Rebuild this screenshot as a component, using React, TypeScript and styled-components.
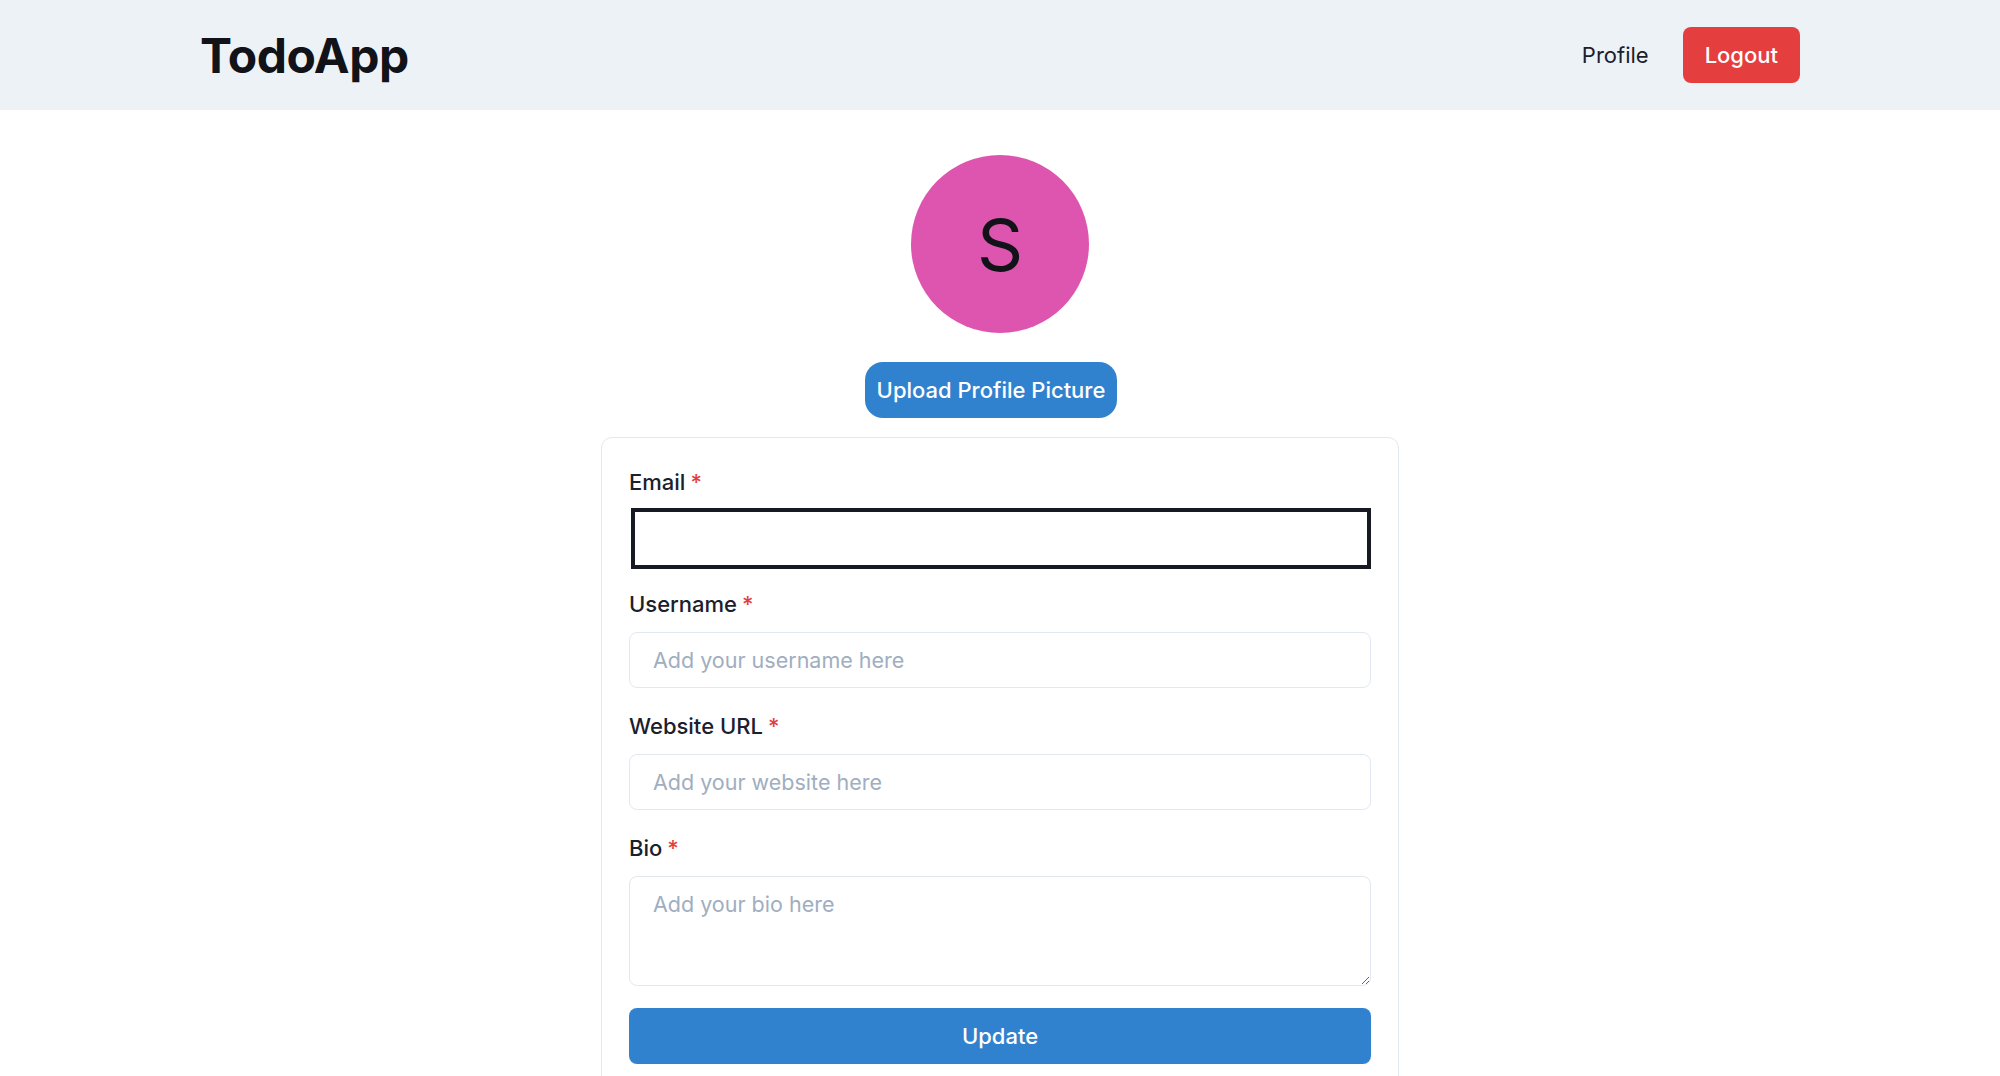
import React from "react";
import styled, { createGlobalStyle } from "styled-components";

const GlobalStyle = createGlobalStyle`
  html, body {
    margin: 0;
    padding: 0;
    background: #ffffff;
    font-family: Inter, "Noto Sans", "Liberation Sans", sans-serif;
    color: #1a202c;
  }
  * { box-sizing: border-box; }
`;

const Header = styled.header`
  height: 110px;
  background: #edf2f7;
  display: flex;
  justify-content: center;
`;

const HeaderInner = styled.div`
  width: 1600px;
  display: flex;
  align-items: center;
  justify-content: space-between;
`;

const Logo = styled.h1`
  margin: 0;
  font-size: 48px;
  font-weight: 700;
  letter-spacing: -0.5px;
  color: #111318;
`;

const Nav = styled.nav`
  display: flex;
  align-items: center;
  gap: 34px;
`;

const NavLink = styled.a`
  font-size: 22px;
  color: #1a202c;
  text-decoration: none;
`;

const Button = styled.button<{ $tone: "red" | "blue"; $pill?: boolean; $block?: boolean }>`
  height: 56px;
  padding: 0 ${(p) => (p.$pill ? "12px" : "22px")};
  border: none;
  border-radius: ${(p) => (p.$pill ? "18px" : "8px")};
  background: ${(p) => (p.$tone === "red" ? "#e53e3e" : "#3182ce")};
  color: #ffffff;
  font-family: inherit;
  font-size: 22px;
  font-weight: 500;
  width: ${(p) => (p.$block ? "100%" : "auto")};
  cursor: pointer;
`;

const Main = styled.main`
  display: flex;
  flex-direction: column;
  align-items: center;
  padding-top: 45px;
`;

const Avatar = styled.div`
  width: 178px;
  height: 178px;
  border-radius: 50%;
  background: #dd55af;
  display: flex;
  align-items: center;
  justify-content: center;
  font-size: 72px;
  font-weight: 400;
  color: #111318;
`;

const UploadRow = styled.div`
  margin-top: 29px;
  padding-right: 18px;
  display: flex;
  justify-content: center;
`;

const Card = styled.form`
  margin-top: 19px;
  width: 798px;
  border: 1px solid #e2e8f0;
  border-radius: 11px;
  padding: 28px 27px 40px;
  display: flex;
  flex-direction: column;
  gap: 22px;
`;

const Field = styled.div`
  display: flex;
  flex-direction: column;
`;

const Label = styled.label`
  font-size: 22px;
  line-height: 33px;
  font-weight: 500;
  margin-bottom: 11px;
  color: #1a202c;
`;

const Required = styled.span`
  color: #e53e3e;
  margin-left: 5px;
`;

const Input = styled.input<{ $focused?: boolean }>`
  width: ${(p) => (p.$focused ? "calc(100% - 2px)" : "100%")};
  height: ${(p) => (p.$focused ? "61px" : "56px")};
  margin: ${(p) => (p.$focused ? "-2px 0 -3px 2px" : "0")};
  border: ${(p) => (p.$focused ? "4px solid #171923" : "1px solid #e2e8f0")};
  border-radius: ${(p) => (p.$focused ? "0" : "8px")};
  padding: 0 23px;
  font-family: inherit;
  font-size: 21.5px;
  color: #1a202c;
  outline: none;
  background: #ffffff;
  &::placeholder { color: #a0aec0; }
`;

const TextArea = styled.textarea`
  width: 100%;
  height: 110px;
  border: 1px solid #e2e8f0;
  border-radius: 8px;
  padding: 11px 23px;
  font-family: inherit;
  font-size: 21.5px;
  line-height: 33px;
  color: #1a202c;
  resize: vertical;
  outline: none;
  &::placeholder { color: #a0aec0; }
`;

const fields = [
  { label: "Email", placeholder: "", focused: true },
  { label: "Username", placeholder: "Add your username here" },
  { label: "Website URL", placeholder: "Add your website here" },
];

export default function App() {
  return (
    <>
      <GlobalStyle />
      <Header>
        <HeaderInner>
          <Logo>TodoApp</Logo>
          <Nav>
            <NavLink href="#">Profile</NavLink>
            <Button $tone="red">Logout</Button>
          </Nav>
        </HeaderInner>
      </Header>
      <Main>
        <Avatar>S</Avatar>
        <UploadRow>
          <Button $tone="blue" $pill type="button">
            Upload Profile Picture
          </Button>
        </UploadRow>
        <Card onSubmit={(e) => e.preventDefault()}>
          {fields.map((f) => (
            <Field key={f.label}>
              <Label>
                {f.label}
                <Required>*</Required>
              </Label>
              <Input $focused={f.focused} placeholder={f.placeholder} />
            </Field>
          ))}
          <Field>
            <Label>
              Bio
              <Required>*</Required>
            </Label>
            <TextArea placeholder="Add your bio here" />
          </Field>
          <Button $tone="blue" $block type="submit">
            Update
          </Button>
        </Card>
      </Main>
    </>
  );
}
